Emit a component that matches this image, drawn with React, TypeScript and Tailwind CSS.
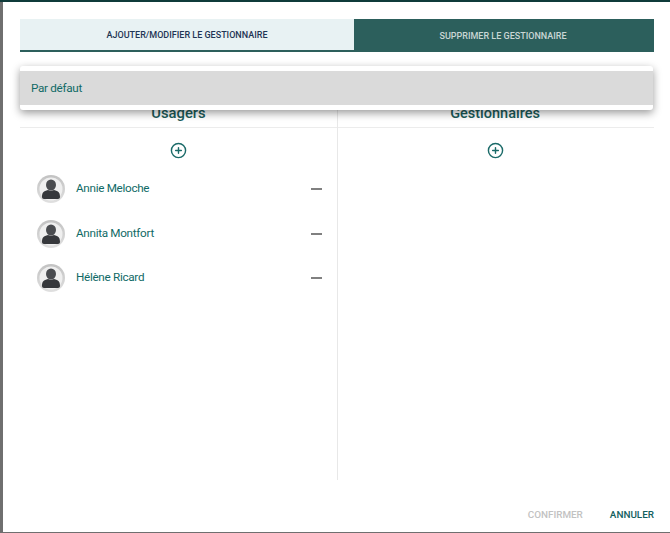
import { CirclePlus } from 'lucide-react';

const users = ['Annie Meloche', 'Annita Montfort', 'Hélène Ricard'];

function Avatar() {
  return (
    <div className="flex h-[28px] w-[28px] items-center justify-center overflow-hidden rounded-full bg-gradient-to-b from-[#c2c2c2] to-[#e0e0e0]">
      <svg viewBox="0 0 28 28" className="h-[28px] w-[28px]">
        <circle cx="14" cy="14" r="11.500" fill="#efefef" />
        <ellipse cx="14" cy="10" rx="5" ry="5.500" fill="#4a4c50" />
        <path d="M5 22c0-4.500 1.500-6 6-7 1.500 1 4.500 1 6 0 4.500 1 6 2.500 6 7 0 1.200-.8 2-2 2H7c-1.200 0-2-.8-2-2z" fill="#36383c" />
      </svg>
    </div>
  );
}

function AddButton() {
  return (
    <div className="flex h-[44px] items-center justify-center">
      <CirclePlus className="h-[17px] w-[17px] text-[#1a6a68]" strokeWidth={2} />
    </div>
  );
}

export default function App() {
  return (
    <div className="relative flex h-[533px] w-[670px] flex-col overflow-hidden bg-[#6f6f6f] pt-[2px] pb-px pl-[3px] font-['Roboto',sans-serif]">
      <div className="absolute inset-x-0 top-0 h-[2px] bg-[#0f3b3a]" />
      <div className="relative flex flex-1 flex-col bg-white pt-[17px] pl-[17px] pr-[16px]">
        {/* Tabs */}
        <div className="flex h-[33px]">
          <div className="flex w-[334px] items-center justify-center border-b-2 border-[#2c5f5c] bg-[#e8f2f3] pt-[2px] text-[9px] font-medium text-[#1f3554]">
            AJOUTER/MODIFIER LE GESTIONNAIRE
          </div>
          <div className="flex flex-1 items-center justify-center bg-[#2c5f5c] pt-[2px] pr-[2px] text-[9px] font-medium text-[#c9d6d5]">
            SUPPRIMER LE GESTIONNAIRE
          </div>
        </div>

        {/* Columns */}
        <div className="mt-[58px] flex h-[370px]">
          <div className="w-[318px] border-r border-[#e8e8e8]">
            <div className="h-[18px] border-b border-[#ececec] text-center text-[14.800px] leading-[7px] font-medium text-[#1a5c5a]">
              Usagers
            </div>
            <AddButton />
            <div className="-mt-[5px] flex flex-col">
              {users.map((name) => (
                <div key={name} className="flex h-[44.500px] items-center pl-[17px] pr-[15px]">
                  <Avatar />
                  <span className="ml-[11px] flex-1 text-[11.700px] tracking-[-0.3px] text-[#106a66]">{name}</span>
                  <div className="h-[2px] w-[11px] bg-[#808080]" />
                </div>
              ))}
            </div>
          </div>
          <div className="flex-1">
            <div className="h-[18px] border-b border-[#ececec] pr-[2px] text-center text-[14.500px] leading-[7px] font-medium text-[#1a5c5a]">
              Gestionnaires
            </div>
            <div className="pr-[2px]">
              <AddButton />
            </div>
          </div>
        </div>

        {/* Footer */}
        <div className="mt-[28px] flex justify-end gap-[27px] text-[9.900px] font-medium">
          <span className="text-[#c2c2c2]">CONFIRMER</span>
          <span className="text-[#13605e]">ANNULER</span>
        </div>

        {/* Select dropdown */}
        <div className="absolute left-[17px] right-[17px] top-[64px] rounded-[3px] bg-white py-[5px] shadow-[0_3px_8px_rgba(0,0,0,0.4)]">
          <div className="flex h-[34px] items-center bg-[#dadada] pt-px pl-[11px] text-[11.700px] tracking-[-0.3px] text-[#106a66]">
            Par défaut
          </div>
        </div>
      </div>
    </div>
  );
}
